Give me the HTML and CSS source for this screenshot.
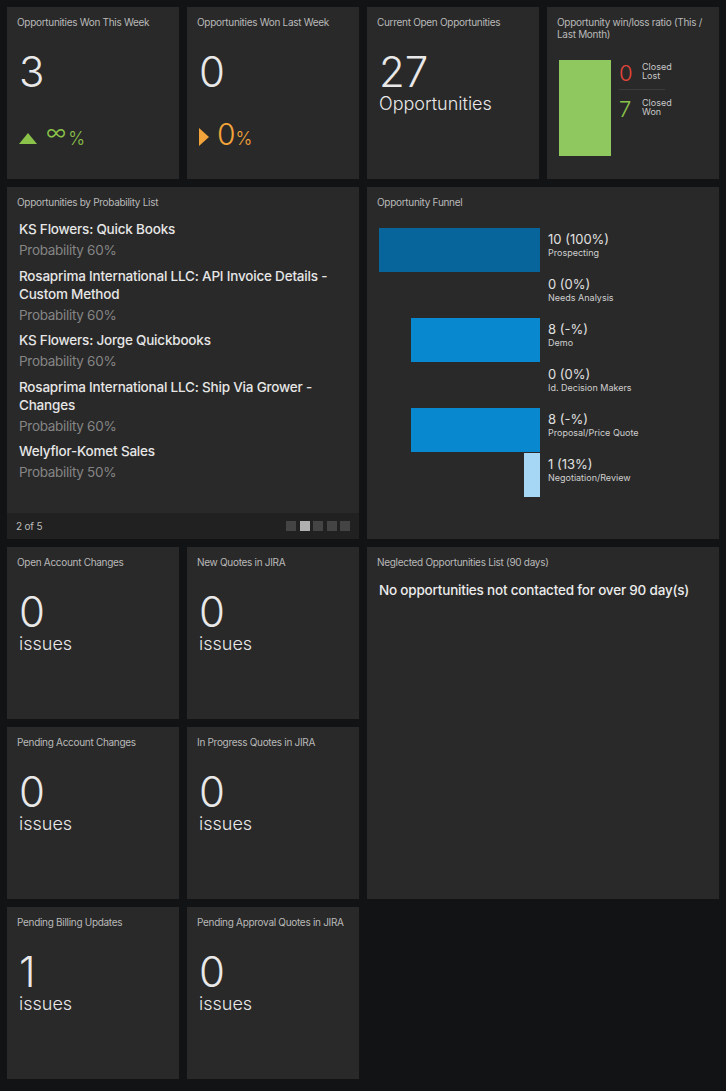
FILE: index.html
```html
<!DOCTYPE html>
<html>
<head>
<meta charset="utf-8">
<link rel="stylesheet" href="styles.css">
</head>
<body>
<div class="grid">
  <div class="tile">
    <div class="title">Opportunities Won This Week</div>
    <div class="big">3</div>
    <div class="trend">
      <span class="tri-up"></span>
      <span class="tval green"><span class="inf">∞</span><span class="pct">%</span></span>
    </div>
  </div>
  <div class="tile">
    <div class="title">Opportunities Won Last Week</div>
    <div class="big">0</div>
    <div class="trend">
      <span class="tri-right"></span>
      <span class="tval orange">0<span class="pct">%</span></span>
    </div>
  </div>
  <div class="tile">
    <div class="title">Current Open Opportunities</div>
    <div class="big">27</div>
    <div class="unit">Opportunities</div>
  </div>
  <div class="tile">
    <div class="title">Opportunity win/loss ratio (This / Last Month)</div>
    <div class="wl">
      <div class="wl-bar"></div>
      <div class="wl-col">
        <div class="wl-row first">
          <span class="wl-num red">0</span>
          <span class="wl-lab">Closed<br>Lost</span>
        </div>
        <div class="wl-row">
          <span class="wl-num green">7</span>
          <span class="wl-lab">Closed<br>Won</span>
        </div>
      </div>
    </div>
  </div>

  <div class="tile list-tile span2x2">
    <div class="list-body">
      <div class="title">Opportunities by Probability List</div>
      <div class="items">
        <div class="item"><div class="iname">KS Flowers: Quick Books</div><div class="iprob">Probability 60%</div></div>
        <div class="item"><div class="iname">Rosaprima International LLC: API Invoice Details - Custom Method</div><div class="iprob">Probability 60%</div></div>
        <div class="item"><div class="iname">KS Flowers: Jorge Quickbooks</div><div class="iprob">Probability 60%</div></div>
        <div class="item"><div class="iname">Rosaprima International LLC: Ship Via Grower - Changes</div><div class="iprob">Probability 60%</div></div>
        <div class="item"><div class="iname">Welyflor-Komet Sales</div><div class="iprob">Probability 50%</div></div>
      </div>
    </div>
    <div class="list-foot">
      <span class="pageno">2 of 5</span>
      <span class="pager"><i></i><i class="on"></i><i></i><i></i><i></i></span>
    </div>
  </div>

  <div class="tile span2x2">
    <div class="title">Opportunity Funnel</div>
    <div class="funnel">
      <div class="frow"><div class="fbar-area"><div class="fbar c1" style="width:161px"></div></div><div class="flab"><div class="fval">10 (100%)</div><div class="fname">Prospecting</div></div></div>
      <div class="frow"><div class="fbar-area"></div><div class="flab"><div class="fval">0 (0%)</div><div class="fname">Needs Analysis</div></div></div>
      <div class="frow"><div class="fbar-area"><div class="fbar c2" style="width:129px"></div></div><div class="flab"><div class="fval">8 (-%)</div><div class="fname">Demo</div></div></div>
      <div class="frow"><div class="fbar-area"></div><div class="flab"><div class="fval">0 (0%)</div><div class="fname">Id. Decision Makers</div></div></div>
      <div class="frow"><div class="fbar-area"><div class="fbar c2" style="width:129px"></div></div><div class="flab"><div class="fval">8 (-%)</div><div class="fname">Proposal/Price Quote</div></div></div>
      <div class="frow"><div class="fbar-area"><div class="fbar c3" style="width:16px"></div></div><div class="flab"><div class="fval">1 (13%)</div><div class="fname">Negotiation/Review</div></div></div>
    </div>
  </div>

  <div class="tile">
    <div class="title">Open Account Changes</div>
    <div class="big">0</div>
    <div class="unit">issues</div>
  </div>
  <div class="tile">
    <div class="title">New Quotes in JIRA</div>
    <div class="big">0</div>
    <div class="unit">issues</div>
  </div>
  <div class="tile span2x2">
    <div class="title">Neglected Opportunities List (90 days)</div>
    <div class="empty">No opportunities not contacted for over 90 day(s)</div>
  </div>
  <div class="tile">
    <div class="title">Pending Account Changes</div>
    <div class="big">0</div>
    <div class="unit">issues</div>
  </div>
  <div class="tile">
    <div class="title">In Progress Quotes in JIRA</div>
    <div class="big">0</div>
    <div class="unit">issues</div>
  </div>
  <div class="tile">
    <div class="title">Pending Billing Updates</div>
    <div class="big">1</div>
    <div class="unit">issues</div>
  </div>
  <div class="tile">
    <div class="title">Pending Approval Quotes in JIRA</div>
    <div class="big">0</div>
    <div class="unit">issues</div>
  </div>
</div>
</body>
</html>
```
FILE: styles.css
```css
html, body {
  margin: 0;
  padding: 0;
  background: #121315;
  font-family: Inter, "Noto Sans", sans-serif;
  color: #e6e6e6;
}
.grid {
  display: grid;
  grid-template-columns: repeat(4, 172px);
  grid-auto-rows: 172px;
  gap: 8px;
  padding: 7px;
  min-height: 1077px;
  box-sizing: border-box;
}
.tile {
  background: #292929;
  padding: 9px 10px;
  box-sizing: border-box;
  overflow: hidden;
}
.span2x2 {
  grid-column: span 2;
  grid-row: span 2;
}
.title {
  font-size: 10px;
  line-height: 12px;
  letter-spacing: -0.3px;
  color: #b9b9b9;
}
.big {
  margin: 23px 0 0 2px;
  font-size: 42px;
  line-height: 42px;
  font-weight: 300;
  color: #e8e8e8;
}
.unit {
  margin-left: 2px;
  font-size: 18px;
  line-height: 21px;
  font-weight: 300;
  color: #e8e8e8;
}
.trend {
  display: flex;
  align-items: flex-end;
  margin: 31px 0 0 2px;
  height: 30px;
}
.tri-up {
  width: 0;
  height: 0;
  border-left: 9.5px solid transparent;
  border-right: 9.5px solid transparent;
  border-bottom: 11px solid #8bc34a;
  margin: 0 9px 10px 0;
}
.tri-right {
  width: 0;
  height: 0;
  border-top: 9px solid transparent;
  border-bottom: 9px solid transparent;
  border-left: 10px solid #f2a33a;
  margin: 0 8px 8px 0;
}
.tval {
  font-size: 30px;
  line-height: 30px;
  font-weight: 300;
}
.inf {
  font-size: 22px;
  vertical-align: 5px;
  margin-right: 2px;
}
.pct {
  font-size: 18px;
}
.green { color: #8bc34a; }
.orange { color: #f2a33a; }
.red { color: #e5463b; }

.wl {
  display: flex;
  margin: 20px 0 0 2px;
}
.wl-bar {
  width: 52px;
  height: 96px;
  background: #8fc85f;
}
.wl-col {
  margin-left: 8px;
  width: 46px;
}
.wl-row {
  display: flex;
  align-items: flex-start;
  padding-top: 8px;
}
.wl-row.first {
  padding: 2px 0 5px;
  border-bottom: 1px solid #3c3c3c;
}
.wl-num {
  width: 23px;
  flex: none;
  font-size: 22px;
  line-height: 22px;
  font-weight: 300;
}
.wl-lab {
  font-size: 9px;
  line-height: 9px;
  color: #c8c8c8;
  white-space: nowrap;
}

.list-tile {
  padding: 0;
  display: flex;
  flex-direction: column;
}
.list-body {
  padding: 9px 10px;
  flex: 1;
}
.items {
  margin: 12px 0 0 2px;
  padding-right: 10px;
}
.item {
  margin-bottom: 7.5px;
}
.iname {
  font-size: 13.5px;
  line-height: 18px;
  letter-spacing: -0.2px;
  font-weight: 500;
  color: #e6e6e6;
}
.iprob {
  margin-top: 3px;
  font-size: 13.5px;
  line-height: 18px;
  letter-spacing: -0.3px;
  color: #858585;
}
.list-foot {
  height: 26px;
  background: #212121;
  display: flex;
  align-items: center;
  justify-content: space-between;
  padding: 0 9px;
}
.pageno {
  font-size: 10px;
  letter-spacing: -0.2px;
  color: #bdbdbd;
}
.pager {
  display: flex;
  gap: 3.5px;
}
.pager i {
  display: block;
  width: 10px;
  height: 10px;
  background: #444;
}
.pager i.on {
  background: #b0b0b0;
}

.funnel {
  margin: 20px 0 0 2px;
  display: flex;
  flex-direction: column;
  gap: 1px;
}
.frow {
  display: flex;
  height: 44px;
}
.fbar-area {
  width: 161px;
  display: flex;
  justify-content: flex-end;
}
.fbar { height: 44px; }
.c1 { background: #08659b; }
.c2 { background: #0788cf; }
.c3 { background: #a6d8f6; }
.flab {
  margin-left: 8px;
  padding-top: 4px;
}
.fval {
  font-size: 13px;
  line-height: 14px;
  color: #e0e0e0;
}
.fname {
  font-size: 9px;
  line-height: 11px;
  color: #cfcfcf;
  margin-top: 0.5px;
}
.empty {
  margin: 13px 0 0 2px;
  font-size: 13.5px;
  line-height: 18px;
  letter-spacing: -0.2px;
  font-weight: 500;
  color: #ececec;
}
```
